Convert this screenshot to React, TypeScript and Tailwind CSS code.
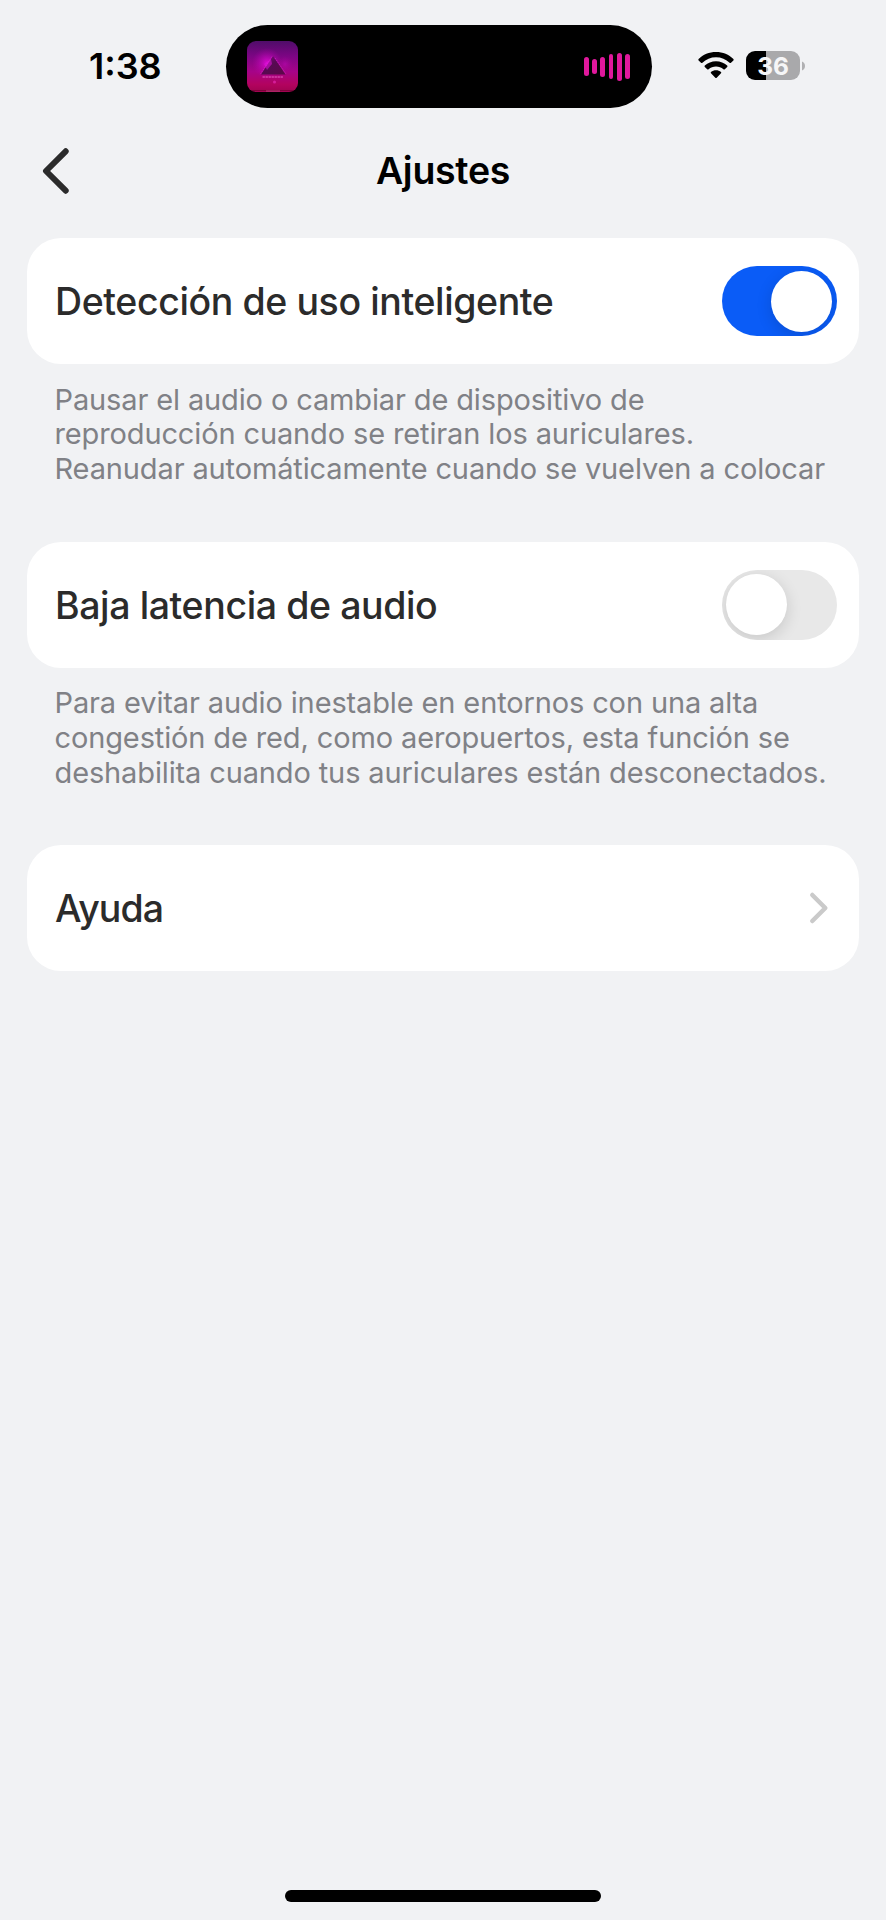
import type { ReactNode } from "react";

function AlbumArt() {
  return (
    <svg className="h-[51px] w-[51px] rounded-[9px]" viewBox="0 0 51 51" aria-hidden="true">
      <defs>
        <linearGradient id="sky" x1="0" y1="0" x2="0" y2="1">
          <stop offset="0" stopColor="#4f0d69" />
          <stop offset="0.3" stopColor="#7d0584" />
          <stop offset="0.6" stopColor="#a60388" />
          <stop offset="0.85" stopColor="#b3035f" />
          <stop offset="1" stopColor="#a00350" />
        </linearGradient>
        <radialGradient id="glow">
          <stop offset="0" stopColor="#e60be0" stopOpacity="0.85" />
          <stop offset="1" stopColor="#b805a8" stopOpacity="0" />
        </radialGradient>
        <linearGradient id="peak" x1="0" y1="0" x2="1" y2="1">
          <stop offset="0" stopColor="#8a0a90" />
          <stop offset="0.45" stopColor="#560a52" />
          <stop offset="1" stopColor="#5c0848" />
        </linearGradient>
      </defs>
      <rect width="51" height="51" fill="url(#sky)" />
      <circle cx="20" cy="22" r="15" fill="url(#glow)" />
      <circle cx="38" cy="23" r="8" fill="url(#glow)" opacity="0.35" />
      <path d="M26 15 L38.5 33.5 H14 Z" fill="url(#peak)" />
      <path d="M25 15.5 L13.5 33 M28 17 L39 33" fill="none" stroke="#dc2fd2" strokeWidth="0.8" strokeDasharray="1.5 1" opacity="0.75" />
      <path d="M17 23 L24 18 L25 23 L20 29 Z" fill="#df12d8" opacity="0.55" />
      <path d="M15.5 36 H36" stroke="#e052b8" strokeWidth="1.8" strokeDasharray="2.4 0.6" opacity="0.6" />
      <circle cx="27.5" cy="41" r="1.5" fill="#e62ab0" opacity="0.7" />
      <path d="M0 49.5 H51" stroke="#69062f" strokeWidth="1" opacity="0.7" />
      <path d="M19 50 H33" stroke="#c9578f" strokeWidth="1.2" opacity="0.6" />
    </svg>
  );
}

function Equalizer() {
  return (
    <div className="flex h-[28px] items-center gap-[3.6px]">
      <div className="h-[18.5px] w-[4.7px] rounded-full bg-[#e0189c]" />
      <div className="h-[14.7px] w-[4.7px] rounded-full bg-[#e0189c]" />
      <div className="h-[20px] w-[4.7px] rounded-full bg-[#e0189c]" />
      <div className="h-[25.6px] w-[4.7px] rounded-full bg-[#e0189c]" />
      <div className="h-[28px] w-[4.7px] rounded-full bg-[#e0189c]" />
      <div className="h-[25.6px] w-[4.7px] rounded-full bg-[#e0189c]" />
    </div>
  );
}

function Wifi() {
  return (
    <svg className="h-[27px] w-[36px]" viewBox="0 0 36 27" aria-hidden="true">
      <path d="M18 0 C24.8 0 31 2.6 35.4 7 C35.8 7.4 35.8 8 35.4 8.4 L33 10.7 C32.6 11.1 32 11.1 31.6 10.7 C28 7.2 23.2 5.2 18 5.2 C12.8 5.2 8 7.2 4.4 10.7 C4 11.1 3.4 11.1 3 10.7 L0.6 8.4 C0.2 8 0.2 7.4 0.6 7 C5 2.6 11.2 0 18 0 Z" />
      <path d="M18 9.2 C22.3 9.2 26.2 10.8 29.2 13.5 C29.6 13.9 29.6 14.5 29.2 14.9 L26.8 17.2 C26.4 17.6 25.8 17.6 25.4 17.2 C23.4 15.4 20.8 14.4 18 14.4 C15.2 14.4 12.6 15.4 10.6 17.2 C10.2 17.6 9.6 17.6 9.2 17.2 L6.8 14.9 C6.4 14.5 6.4 13.9 6.8 13.5 C9.8 10.8 13.7 9.2 18 9.2 Z" />
      <path d="M18 18.2 C19.9 18.2 21.6 18.8 23 19.9 C23.4 20.3 23.4 20.9 23 21.3 L18.7 25.7 C18.3 26.1 17.7 26.1 17.3 25.7 L13 21.3 C12.6 20.9 12.6 20.3 13 19.9 C14.4 18.8 16.1 18.2 18 18.2 Z" />
    </svg>
  );
}

function Battery() {
  return (
    <div className="flex items-center gap-[2px]">
      <div className="flex h-[29px] w-[54px] items-center justify-center rounded-[9px] bg-[linear-gradient(to_right,#000_20px,#a9a9ab_20px)] pt-[2px] text-[24.5px] leading-none font-bold text-[#f6f6f7]">
        36
      </div>
      <svg className="h-[10px] w-[4px]" viewBox="0 0 4 10" aria-hidden="true">
        <path d="M0 0.5 C4 2 4 8 0 9.5 Z" fill="#b0b0b2" />
      </svg>
    </div>
  );
}

function StatusBar() {
  return (
    <div className="flex h-[133px] items-start">
      <div className="w-[226px] pt-[44px] pl-[89px] text-[36px] leading-[44px] font-semibold text-black">1:38</div>
      <div className="mt-[25px] flex h-[83px] w-[426px] items-center justify-between rounded-full bg-black pr-[22px] pl-[21px]">
        <AlbumArt />
        <Equalizer />
      </div>
      <div className="mt-[51px] ml-[45.5px] flex items-center gap-[12.5px]">
        <Wifi />
        <Battery />
      </div>
    </div>
  );
}

function Header() {
  return (
    <header className="grid h-[75px] grid-cols-[1fr_auto_1fr] items-center px-[42px]">
      <button type="button" aria-label="Atrás" className="justify-self-start pt-[1px]">
        <svg className="h-[48px] w-[28px]" viewBox="0 0 28 48" fill="none" aria-hidden="true">
          <path d="M23.7 4.3 L4 24 L23.7 43.7" stroke="#2b2b2b" strokeWidth="6" strokeLinecap="round" strokeLinejoin="round" />
        </svg>
      </button>
      <h1 className="text-[37.5px] leading-[48px] font-semibold tracking-[-0.3px] text-black">Ajustes</h1>
      <span />
    </header>
  );
}

function Toggle({ on }: { on: boolean }) {
  return (
    <div
      role="switch"
      aria-checked={on}
      className={
        on
          ? "flex h-[70px] w-[115px] items-center justify-end overflow-hidden rounded-full bg-[#0a5cf7] px-[4.5px]"
          : "flex h-[70px] w-[115px] items-center justify-start overflow-hidden rounded-full bg-[#e8e8e8] px-[4.5px]"
      }
    >
      <div className="h-[61px] w-[61px] rounded-full bg-white shadow-[0_4px_16px_rgba(0,0,0,0.14)]" />
    </div>
  );
}

function Card({ title, children }: { title: ReactNode; children: ReactNode }) {
  return (
    <div className="flex h-[126px] items-center justify-between rounded-[34px] bg-white pr-[22.5px] pl-[28px]">
      <h2 className="pt-[2px] text-[37.5px] leading-[46px] font-medium tracking-[-0.4px] text-[#2b2b2b]">{title}</h2>
      {children}
    </div>
  );
}

function Note({ lines }: { lines: string[] }) {
  return (
    <p className="mt-[18.5px] mb-[54.3px] pl-[27.5px] text-[29px] leading-[34.9px] tracking-[-0.13px] whitespace-nowrap text-[#808186]">
      {lines.map((line) => (
        <span key={line} className="block">
          {line}
        </span>
      ))}
    </p>
  );
}

export default function App() {
  return (
    <div className="flex h-[1920px] w-[886px] flex-col overflow-hidden bg-[#f1f2f4] font-['Inter',sans-serif]">
      <StatusBar />
      <Header />
      <main className="flex-1 px-[27px] pt-[30px]">
        <Card title="Detección de uso inteligente">
          <Toggle on />
        </Card>
        <Note
          lines={[
            "Pausar el audio o cambiar de dispositivo de",
            "reproducción cuando se retiran los auriculares.",
            "Reanudar automáticamente cuando se vuelven a colocar",
          ]}
        />
        <Card title="Baja latencia de audio">
          <Toggle on={false} />
        </Card>
        <Note
          lines={[
            "Para evitar audio inestable en entornos con una alta",
            "congestión de red, como aeropuertos, esta función se",
            "deshabilita cuando tus auriculares están desconectados.",
          ]}
        />
        <Card title={<span className="tracking-[-0.9px]">Ayuda</span>}>
          <svg className="mr-[8px] h-[34px] w-[20px]" viewBox="0 0 20 34" fill="none" aria-hidden="true">
            <path d="M3.3 4 L16.3 17 L3.3 30" stroke="#cacaca" strokeWidth="4.5" strokeLinecap="round" strokeLinejoin="round" />
          </svg>
        </Card>
      </main>
      <div className="mx-auto mb-[18px] h-[12px] w-[316px] rounded-full bg-black" />
    </div>
  );
}
